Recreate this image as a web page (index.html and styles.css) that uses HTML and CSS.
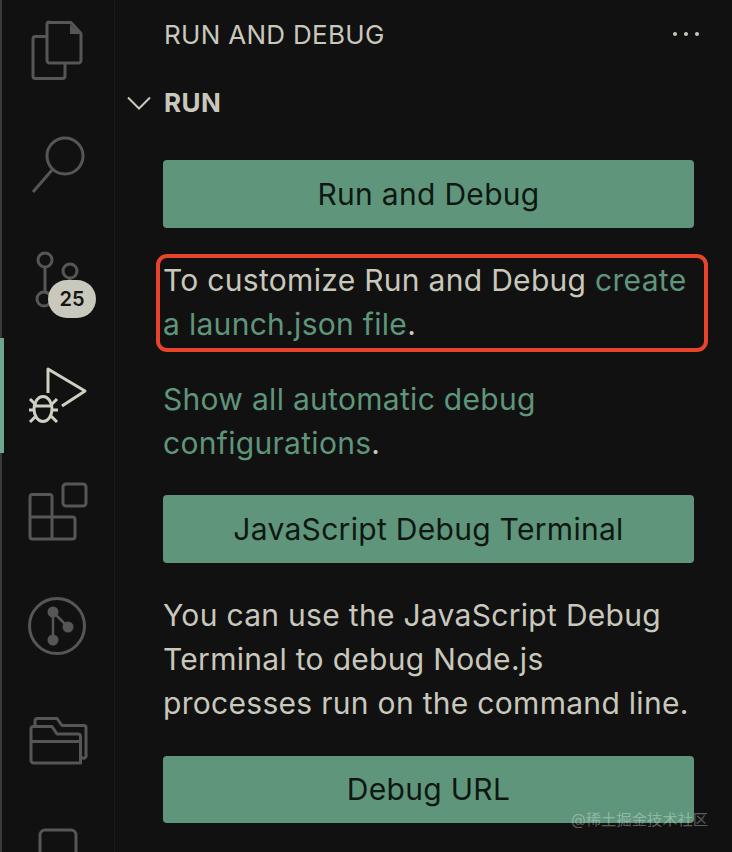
FILE: index.html
```html
<!DOCTYPE html>
<html lang="en">
<head>
<meta charset="utf-8">
<title>Run and Debug</title>
<link rel="stylesheet" href="styles.css">
</head>
<body>
<div class="app">
  <nav class="activity">
    <div class="item">
      <svg class="icon" viewBox="0 0 60 60"><path d="M22 1.500h22l10 11v27a2.500 2.500 0 0 1-2.500 2.500h-29a2.500 2.500 0 0 1-2.500-2.500v-36a2.500 2.500 0 0 1 2.500-2.500z"/><path class="solid" d="M43 3v10h10z"/><path d="M20 15.500H8.500a2.500 2.500 0 0 0-2.500 2.500v37a2.500 2.500 0 0 0 2.500 2.500h27a2.500 2.500 0 0 0 2.500-2.500V42"/></svg>
    </div>
    <div class="item">
      <svg class="icon" viewBox="0 0 60 60"><circle cx="38" cy="20" r="18"/><path d="M25 34 6 56"/></svg>
    </div>
    <div class="item">
      <svg class="icon" viewBox="0 0 60 60"><circle cx="18" cy="9" r="7"/><circle cx="43" cy="20" r="7"/><circle cx="17" cy="48" r="7"/><path d="M18 16v25M43 27c0 8-12 9-20 15"/></svg>
      <span class="badge">25</span>
    </div>
    <div class="item active">
      <svg class="icon" viewBox="0 0 60 60"><path d="M21 27V3l37 22-23 15"/><ellipse cx="16" cy="43" rx="9" ry="12.500"/><path d="M7 40h18M3 33l6 6M30 33l-6 6M2 44h6M25 44h6M3 56l6-6M30 56l-6-6"/></svg>
    </div>
    <div class="item">
      <svg class="icon" viewBox="0 0 60 60"><rect x="36" y="3" width="23" height="22" rx="3"/><path d="M25 36V16a2.500 2.500 0 0 0-2.500-2.500h-17A2.500 2.500 0 0 0 3 16v39.500A2.500 2.500 0 0 0 5.500 58h40a2.500 2.500 0 0 0 2.500-2.500V38.500a2.500 2.500 0 0 0-2.500-2.500H3M25 36v22"/></svg>
    </div>
    <div class="item">
      <svg class="icon" viewBox="0 0 60 60"><circle cx="30" cy="30" r="27.500"/><path class="thin" d="M26 16v28M26 16l15 15"/><circle class="solid" cx="26" cy="16" r="5.500"/><circle class="solid" cx="41" cy="31" r="5.500"/><circle class="solid" cx="26" cy="44" r="5.500"/></svg>
    </div>
    <div class="item">
      <svg class="icon" viewBox="0 0 60 60"><path d="M8 14v-4a2.500 2.500 0 0 1 2.500-2.500H30l5 7h22a2 2 0 0 1 2 2v27a2 2 0 0 1-5 2"/><path d="M4 18a2.500 2.500 0 0 1 2.500-2.500H25l5 7.500h21a2.500 2.500 0 0 1 2.500 2.500V52H6.500A2.500 2.500 0 0 1 4 49.500zM4 30.500h49.500"/></svg>
    </div>
    <div class="item">
      <svg class="icon" viewBox="0 0 60 60"><rect x="13" y="4" width="36" height="40" rx="5"/></svg>
    </div>
  </nav>
  <main class="panel">
    <header class="title-row">
      <h1 class="title">RUN AND DEBUG</h1>
      <svg class="dots" viewBox="0 0 28 6"><circle cx="3" cy="3" r="2"/><circle cx="14" cy="3" r="2"/><circle cx="25" cy="3" r="2"/></svg>
    </header>
    <div class="section-row">
      <svg class="chevron" viewBox="0 0 24 14"><path d="M1 1.500 12 12.500 23 1.500"/></svg>
      <h2 class="section">RUN</h2>
    </div>
    <section class="content">
      <button class="btn">Run and Debug</button>
      <p class="text annotated">To customize Run and Debug <a class="link">create a launch.json file</a>.</p>
      <p class="text"><a class="link">Show all automatic debug configurations</a>.</p>
      <button class="btn">JavaScript Debug Terminal</button>
      <p class="text">You can use the JavaScript Debug Terminal to debug Node.js processes run on the command line.</p>
      <button class="btn">Debug URL</button>
    </section>
  </main>
  <span class="watermark">@稀土掘金技术社区</span>
</div>
</body>
</html>
```
FILE: styles.css
```css
* { box-sizing: border-box; }
html, body { margin: 0; height: 100%; overflow: hidden; background: #111111; }
.app {
  position: relative;
  display: flex;
  width: 732px;
  height: 852px;
  overflow: hidden;
  font-family: Inter, "Noto Sans CJK SC", sans-serif;
  color: #c9c8bc;
}
.activity {
  flex: none;
  width: 115px;
  height: 852px;
  overflow: hidden;
  border-right: 1px solid #1b1b1b;
  box-shadow: inset 2px 0 0 #3a3a3a;
}
.item {
  position: relative;
  height: 115px;
  display: flex;
  align-items: center;
  justify-content: center;
  flex: none;
}
.item:first-child { margin-top: -7px; }
.item.active { box-shadow: inset 4px 0 0 #6fa78e; }
.icon {
  width: 60px;
  height: 60px;
  overflow: visible;
  fill: none;
  stroke: #565656;
  stroke-width: 3;
  stroke-linejoin: round;
}
.icon .solid { fill: #565656; stroke: none; }
.icon .thin { stroke-width: 2.500; }
.active .icon { stroke: #d0cfc4; }
.badge {
  position: absolute;
  left: 48px;
  top: 57px;
  width: 48px;
  height: 38px;
  border-radius: 19px;
  background: #c9c8bc;
  color: #151515;
  font-size: 20px;
  font-weight: 600;
  line-height: 38px;
  text-align: center;
}
.panel {
  flex: 1;
  min-width: 0;
  padding: 0 38px 0 48px;
}
.title-row {
  display: flex;
  align-items: center;
  justify-content: space-between;
  height: 68px;
  padding-left: 1px;
}
.title {
  margin: 0;
  font-size: 26px;
  font-weight: 400;
  letter-spacing: 0.3px;
  color: #c9c8bc;
}
.dots {
  width: 28px;
  height: 6px;
  margin-right: -6px;
  fill: #c9c8bc;
}
.section-row {
  position: relative;
  display: flex;
  align-items: center;
  height: 68px;
  padding-left: 1px;
}
.chevron {
  position: absolute;
  left: -36px;
  top: 28px;
  width: 24px;
  height: 14px;
  fill: none;
  stroke: #c9c8bc;
  stroke-width: 2;
}
.section {
  margin: 0;
  font-size: 26px;
  font-weight: 700;
  letter-spacing: 0.5px;
  color: #c9c8bc;
}
.content {
  display: flex;
  flex-direction: column;
  gap: 30.500px;
  margin-top: 24px;
}
.btn {
  display: block;
  width: 100%;
  height: 67.500px;
  border: 0;
  border-radius: 4px;
  padding: 0;
  background: #5f967b;
  color: #0e1712;
  font: 400 30px/1 Inter, sans-serif;
  letter-spacing: 0.3px;
}
.text {
  position: relative;
  margin: 0;
  font-size: 30px;
  letter-spacing: 0.3px;
  line-height: 44px;
  color: #c9c8bc;
}
.link { color: #5f967b; }
.annotated::after {
  content: "";
  position: absolute;
  left: -7px;
  right: -14px;
  top: -4px;
  bottom: -6px;
  border: 4px solid #e8442b;
  border-radius: 11px;
  pointer-events: none;
}
.watermark {
  position: absolute;
  left: 571px;
  top: 810px;
  font-size: 15.300px;
  line-height: 20px;
  color: rgba(255, 255, 255, 0.33);
}
```
